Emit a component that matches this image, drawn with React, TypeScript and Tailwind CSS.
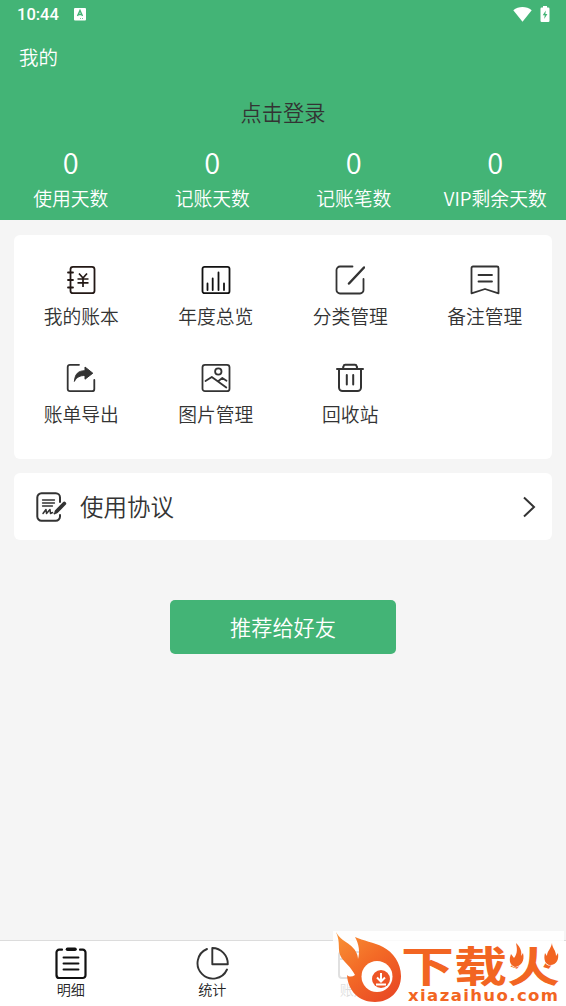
import React from 'react';

interface Stat {
  label: string;
  value: number;
}

interface MenuItem {
  label: string;
  icon: React.ReactNode;
}

const stats: Stat[] = [
  { label: '使用天数', value: 0 },
  { label: '记账天数', value: 0 },
  { label: '记账笔数', value: 0 },
  { label: 'VIP剩余天数', value: 0 },
];

const Icon: React.FC<{ children: React.ReactNode; color?: string }> = ({ children, color = '#333' }) => (
  <svg
    className="w-[30px] h-[30px]"
    viewBox="0 0 30 30"
    fill="none"
    stroke={color}
    strokeWidth="1.8"
    strokeLinecap="round"
    strokeLinejoin="round"
  >
    {children}
  </svg>
);

const menuItems: MenuItem[] = [
  {
    label: '我的账本',
    icon: (
      <Icon color="#231815">
        <rect x="4.5" y="1.8" width="24" height="26.4" rx="2.5" />
        <path d="M2 7.5h5M2 15h5M2 22.5h5" />
        <path d="m13 8.5 4 4.5 4-4.5M17 13v9M11.5 14h11M11.5 17.8h11" strokeLinecap="butt" strokeWidth="1.7" />
      </Icon>
    ),
  },
  {
    label: '年度总览',
    icon: (
      <Icon color="#111">
        <rect x="1.5" y="1.8" width="27" height="26.4" rx="2" />
        <path d="M6.5 18.5V25M11.7 13.5V25M17.5 7.5V25M23 18.5V25" />
      </Icon>
    ),
  },
  {
    label: '分类管理',
    icon: (
      <Icon>
        <path d="M17.5 1.5H5A3.5 3.5 0 0 0 1.5 5v20A3.5 3.5 0 0 0 5 28.5h20a3.5 3.5 0 0 0 3.5-3.5V14" />
        <path d="M14 18.5 29 2.5" strokeWidth="2.5" />
      </Icon>
    ),
  },
  {
    label: '备注管理',
    icon: (
      <Icon>
        <path d="M3 1.5h24a1.5 1.5 0 0 1 1.5 1.5v25.3L15 24 1.5 28.3V3A1.5 1.5 0 0 1 3 1.5Z" />
        <path d="M8.5 10h13.5M8.5 16.5h13.5" />
      </Icon>
    ),
  },
  {
    label: '账单导出',
    icon: (
      <Icon>
        <path d="M13 1.8H4A2.3 2.3 0 0 0 1.7 4v22A2.3 2.3 0 0 0 4 28.2h22a2.3 2.3 0 0 0 2.3-2.3v-9" />
        <path d="M8.5 18C9 11 12 7.8 19 7.7V4l7.8 6.2-7.8 6v-3.7c-5 0-7.8 1.3-10.5 5.5Z" fill="#333" strokeWidth="1" />
      </Icon>
    ),
  },
  {
    label: '图片管理',
    icon: (
      <Icon>
        <rect x="1.5" y="1.8" width="27" height="26.4" rx="2.5" />
        <circle cx="17.3" cy="8.5" r="3.2" />
        <path d="m4.5 18 6.3-4 14.5 10.5M17.5 18l3.8-3 4.2 2.8" />
      </Icon>
    ),
  },
  {
    label: '回收站',
    icon: (
      <Icon>
        <path d="M2 6h26M8 5.5l.5-2.2a1.8 1.8 0 0 1 1.8-1.5h9.6a1.8 1.8 0 0 1 1.8 1.5l.5 2.2" strokeWidth="2" />
        <path d="M4 7v17.5A3.5 3.5 0 0 0 7.5 28h15a3.5 3.5 0 0 0 3.5-3.5V7" strokeWidth="2" />
        <path d="M11.8 12v9.5M18.2 12v9.5" strokeWidth="2" />
      </Icon>
    ),
  },
];

const StatusBar: React.FC = () => (
  <div className="flex h-[29px] items-center justify-between pl-[17px] pr-4 text-white">
    <div className="flex items-center">
      <span className="w-[43px] pt-[2px] font-[Roboto] text-[16.5px] font-medium leading-none">10:44</span>
      <svg className="ml-[14px] h-[13px] w-[12px]" viewBox="0 0 12 13">
        <rect width="12" height="12.5" rx="1" fill="#fff" />
        <path d="m3.5 8 2.5-5.5L8.5 8M4.5 6.5h3" fill="none" stroke="#43b476" strokeWidth="1.4" />
        <path d="M6 10.5h4" stroke="#43b476" strokeWidth=".7" strokeDasharray="1 1" />
      </svg>
    </div>
    <div className="flex items-center gap-[8px]">
      <svg className="h-[15px] w-[19px]" viewBox="0 0 19 15">
        <path d="M.3 3.2C5.5-1 13.5-1 18.7 3.2L9.5 14.8Z" fill="#fff" />
      </svg>
      <svg className="-mt-[2px] h-[16px] w-[10px]" viewBox="0 0 10 16">
        <path d="M3 0h4v1.5h1.3q1.2 0 1.2 1.2v12.1q0 1.2-1.2 1.2H1.7Q.5 16 .5 14.8V2.7q0-1.2 1.2-1.2H3Z" fill="#fff" />
        <path d="M5.8 4.5 2.7 9.3h2L4.2 13l3.2-5h-2Z" fill="#43b476" />
      </svg>
    </div>
  </div>
);

const TabBar: React.FC = () => (
  <nav className="grid h-[66px] grid-cols-4 border-t border-[#dcdcdc] bg-white text-[14.1px] leading-[20px] text-[#222]">
    <div className="flex flex-col items-center pt-[6px]">
      <svg className="h-[33px] w-[32px]" viewBox="0 0 32 33" fill="none" stroke="#111" strokeWidth="2.2" strokeLinecap="round">
        <path d="M7 2.7H4.2A2.7 2.7 0 0 0 1.5 5.4v23A2.7 2.7 0 0 0 4.2 31h23.6a2.7 2.7 0 0 0 2.7-2.7V5.4a2.7 2.7 0 0 0-2.7-2.7H25" />
        <path d="M12.5 2.2h7.5" strokeWidth="3.6" />
        <path d="M8.5 10.5h15M8.5 16.5h15M8.5 22.5h15" strokeWidth="1.9" />
      </svg>
      <span className="-mt-px">明细</span>
    </div>
    <div className="flex flex-col items-center pt-[6px]">
      <svg className="h-[33px] w-[34px]" viewBox="0 0 34 33" fill="none" stroke="#333" strokeWidth="1.9" strokeLinecap="round" strokeLinejoin="round">
        <path d="M12 2A15.4 15.4 0 1 0 32 22.5" />
        <path d="M17.3 1v16.2h15.5A15.8 15.8 0 0 0 17.3 1Z" />
      </svg>
      <span className="-mt-px">统计</span>
    </div>
    <div className="flex flex-col items-center pt-[6px]">
      <svg className="h-[33px] w-[32px]" viewBox="0 0 32 33" fill="none" stroke="#333" strokeWidth="2">
        <rect x="1" y="5" width="30" height="26" rx="3" />
        <path d="M1 12h8l7 7 7-7h8" />
      </svg>
      <span className="-mt-px">账户</span>
    </div>
  </nav>
);

const Watermark: React.FC = () => (
  <div className="absolute bottom-0 right-[2px] h-[75px] w-[231px] bg-white/85 font-['Noto_Sans_CJK_SC',sans-serif] text-[#f26522]">
    <svg className="absolute left-[3px] top-0 h-[75px] w-[67px]" viewBox="0 0 67 75">
      <defs>
        <linearGradient id="flame" x1="0" y1="0" x2=".8" y2="1">
          <stop offset="0" stopColor="#f99335" />
          <stop offset=".5" stopColor="#f36a26" />
          <stop offset="1" stopColor="#e94925" />
        </linearGradient>
      </defs>
      <path
        d="M0 1c4 7 9 9 14 13 5 4 8 9 8 14 2-7 1-15-3-22 8 4 19 5 28 10 10 5 18 16 18 29 0 15-11 26-26 26-16 0-27-11-28-27 2 2 5 2 8 0C15 36 9 32 5 26 1 19 5 12 0 1Z"
        fill="url(#flame)"
      />
      <circle cx="41" cy="45.5" r="15.5" fill="#fff" />
      <circle cx="45" cy="48" r="9" fill="#ed5425" />
      <path d="M45 42v8m-4-3.5 4 4 4-4M40 53.5h10" fill="none" stroke="#fff" strokeWidth="2" />
    </svg>
    <span className="absolute left-[68px] top-[12px] origin-top scale-y-[0.79] whitespace-nowrap text-[53px] font-bold leading-[53px]">
      下载火
    </span>
    {/* small flames on both sides of the last character */}
    <svg className="absolute right-[5px] top-[12px] h-[27px] w-[50px]" viewBox="0 0 50 27" fill="#f26522" stroke="#fff" strokeWidth="1.2" paintOrder="stroke">
      <path d="M7 0c5 5 6 9 5 13l2-3c2 8-2 13-8 14C0 22 0 16 2 11l3 4C9 10 8 5 7 0Z" />
      <path d="M43 0c-1 6-5 8-5 13l-2-3c-2 7 1 12 5 12 7 0 9-6 8-12l-2 3c0-6-4-8-4-13Z" />
    </svg>
    <span className="absolute left-[75px] top-[57px] whitespace-nowrap font-['DejaVu_Sans',sans-serif] text-[16.5px] font-bold leading-[16px] tracking-[1.4px]">
      xiazaihuo.com
    </span>
  </div>
);

const App: React.FC = () => {
  return (
    <div className="relative flex h-[1006px] w-[566px] flex-col overflow-hidden bg-[#f5f5f5] font-['Noto_Sans_CJK_SC',sans-serif] font-[350] text-[#333]">
      <header className="h-[220px] bg-[#43b476]">
        <StatusBar />
        <h1 className="pl-[19px] pt-[13px] text-[19.5px] leading-[30px] text-white">我的</h1>
        <div className="mt-[24px] text-center text-[21.2px] leading-[32px]">点击登录</div>
        <div className="mt-[13px] grid grid-cols-4 text-white">
          {stats.map(stat => (
            <div key={stat.label} className="flex flex-col items-center">
              <span className="text-[29px] leading-[40px]">{stat.value}</span>
              <span className="mt-[2px] whitespace-nowrap text-[18.8px] leading-[30px]">{stat.label}</span>
            </div>
          ))}
        </div>
      </header>

      <main className="flex flex-1 flex-col px-[14px] pt-[15px]">
        <section className="grid h-[224px] grid-cols-4 content-start gap-y-[26px] rounded-md bg-white pt-[30px]">
          {menuItems.map(item => (
            <div key={item.label} className="flex h-[72px] flex-col items-center gap-[5px]">
              {item.icon}
              <span className="text-[18.8px] leading-[31px]">{item.label}</span>
            </div>
          ))}
        </section>

        <section className="mt-[14px] flex h-[67px] items-center rounded-md bg-white pl-[22px] pr-[16px]">
          <svg className="h-[30px] w-[31px]" viewBox="0 0 31 30" fill="none" stroke="#333" strokeWidth="2" strokeLinecap="round" strokeLinejoin="round">
            <path d="M24 10V5.5A4.2 4.2 0 0 0 19.8 1.3H5.5a4.2 4.2 0 0 0-4.2 4.2v19a4.2 4.2 0 0 0 4.2 4.2h14.3a4.2 4.2 0 0 0 4.2-4.2V23" />
            <path d="M6.5 8h12M6.5 11h12M6.5 14h10" strokeWidth="1.3" />
            <path d="m7 21.5 3-4 .5 4 3.5-4 .5 4 2-1" strokeWidth="1.5" />
            <path d="m20.5 19.5 7.8-8" strokeWidth="3.8" />
            <path d="m18.5 21.5 1.5-1" />
          </svg>
          <span className="-mt-[2px] ml-[13px] flex-1 text-[23.5px] leading-[36px]">使用协议</span>
          <svg className="h-[22px] w-[14px]" viewBox="0 0 14 22" fill="none" stroke="#333" strokeWidth="2">
            <path d="m2 1.5 10 9.5L2 20.5" />
          </svg>
        </section>

        <button className="mt-[60px] h-[54px] w-[226px] self-center rounded-[5px] bg-[#43b476] text-[21.2px] text-white">
          推荐给好友
        </button>
      </main>

      <TabBar />
      <Watermark />
    </div>
  );
};

export default App;
